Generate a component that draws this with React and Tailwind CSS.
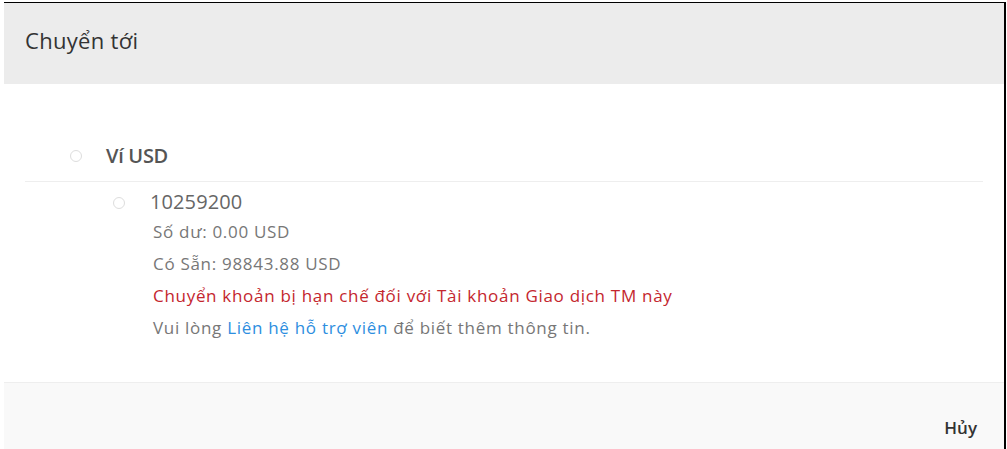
export default function App() {
  return (
    <div className="h-[449px] w-[1007px] overflow-hidden bg-white font-['Open_Sans',sans-serif]">
      <div className="ml-[4px] mt-[2px] flex h-[447px] w-[1002px] flex-col border-r-2 border-t border-black">
        <div className="flex h-[81px] items-center bg-[#ececec] px-[21px] pb-[6px]">
          <h2 className="text-[22px] tracking-[0.3px] text-[#333]">Chuyển tới</h2>
        </div>

        <div className="h-[298px] px-[21px] pt-[57px]">
          <div className="flex h-[30px] items-center pl-[45px]">
            <span className="h-[12px] w-[12px] rounded-full border border-[#ddd] bg-white" />
            <span className="ml-[24px] text-[20px] font-semibold tracking-[-0.3px] text-[#555]">Ví USD</span>
          </div>
          <div className="mt-[10px] border-t border-[#eee]" />
          <div className="flex pl-[88px] pt-[6px]">
            <span className="mt-[9px] h-[12px] w-[12px] rounded-full border border-[#ddd] bg-white" />
            <div className="ml-[25px]">
              <div className="h-[28px] text-[20px] leading-[28px] tracking-[0.1px] text-[#666]">10259200</div>
              <div className="pl-[3px] text-[17px] leading-[32px] tracking-[0.7px] text-[#777]">
                <div>Số dư: 0.00 USD</div>
                <div>Có Sẵn: 98843.88 USD</div>
                <div className="text-[#c4262e]">Chuyển khoản bị hạn chế đối với Tài khoản Giao dịch TM này</div>
                <div>
                  Vui lòng <a className="text-[#2d8ee0]">Liên hệ hỗ trợ viên</a> để biết thêm thông tin.
                </div>
              </div>
            </div>
          </div>
        </div>

        <div className="flex flex-1 items-end justify-end border-t border-[#eee] bg-[#f9f9f9] pb-[9px] pr-[27px]">
          <button className="text-[17px] font-semibold text-[#333]">Hủy</button>
        </div>
      </div>
    </div>
  );
}
